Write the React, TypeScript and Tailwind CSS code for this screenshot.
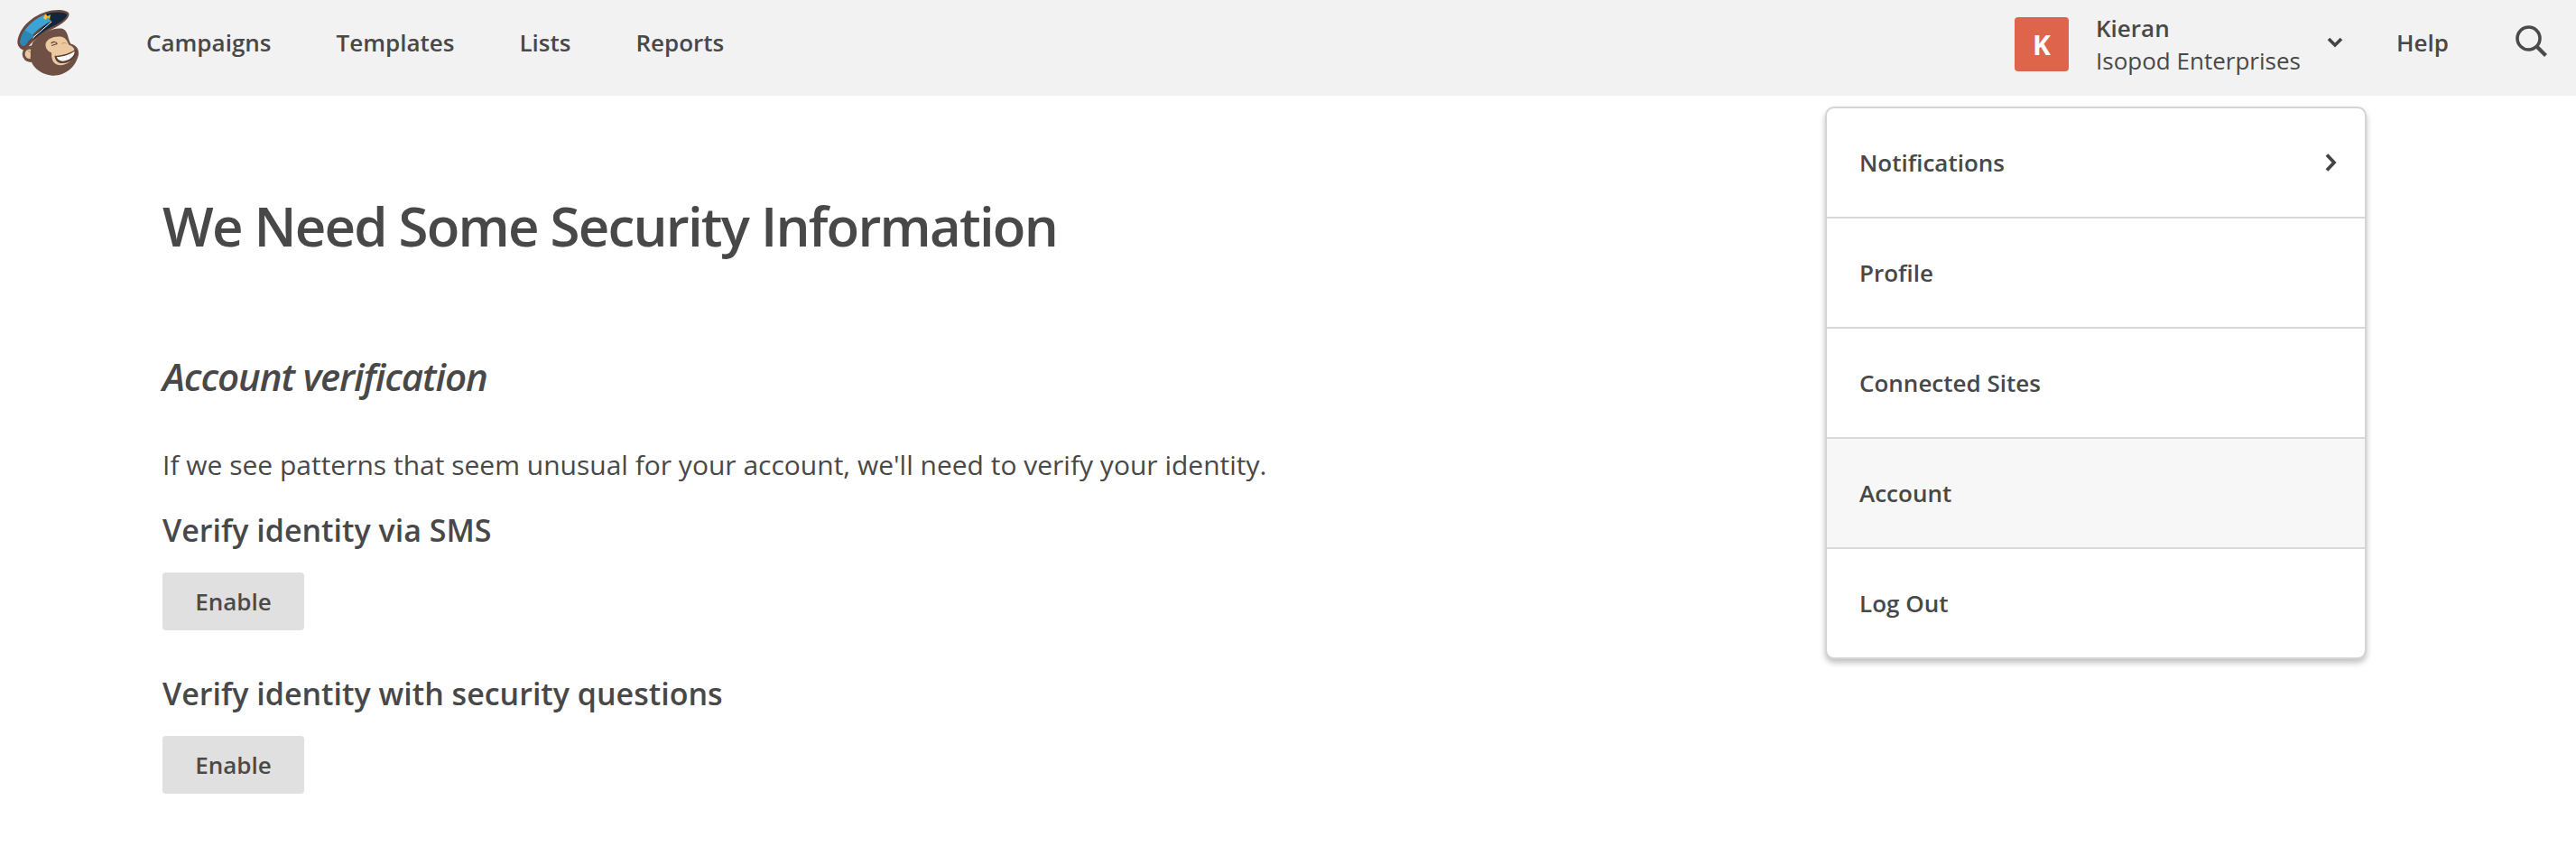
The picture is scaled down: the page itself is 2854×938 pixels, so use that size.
function Logo({ className }: { className: string }) {
  return (
    <svg viewBox="50 30 230 235" className={className}>
      <path d="M56 140C60 100 95 58 150 40C180 30 218 30 228 44C232 60 205 80 172 97C130 117 100 142 82 168C70 168 56 156 56 140Z" fill="#6a4a40" />
      <path d="M65 140C69 105 100 68 148 48L170 72C130 88 105 112 88 142C80 157 67 155 65 140Z" fill="#3ba3d6" />
      <path d="M65 140C67 125 73 112 81 100L112 120C102 128 94 135 88 142C80 157 67 155 65 140Z" fill="#2b86b8" />
      <path d="M148 47C175 38 210 38 221 47C224 58 197 77 167 91C147 101 127 116 110 132C125 102 145 82 170 70Z" fill="#13263c" />
      <path d="M108 126L170 72" stroke="#ffffff" strokeWidth="3" fill="none" />
      <path d="M142 60L150 46L157 54L166 48L164 64L157 58L150 66Z" fill="#f5c12e" />
      <circle cx="100" cy="180" r="28" fill="#6f5045" />
      <circle cx="97" cy="180" r="16" fill="#e9c8a2" />
      <path d="M92 170C104 172 108 186 98 192" stroke="#a87e5f" strokeWidth="3" fill="none" />
      <path d="M108 140C135 108 180 90 208 96C226 104 224 130 234 146C255 150 266 170 258 190C248 225 215 254 172 252C130 248 100 220 100 190C100 170 100 155 108 140Z" fill="#6f5045" />
      <path d="M150 146C154 130 176 120 200 122C218 124 222 138 228 150C244 154 250 168 246 180C240 206 212 222 190 216C176 212 168 196 170 176C158 172 148 160 150 146Z" fill="#ecc9a0" />
      <path d="M168 145C175 137 185 139 189 146M170 152L189 146" stroke="#5b3f35" strokeWidth="3.5" fill="none" />
      <path d="M203 146C208 142 216 142 220 146" stroke="#c09a78" strokeWidth="3" fill="none" />
      <path d="M180 186C205 186 236 176 252 163C258 184 238 210 205 211C190 211 181 200 180 186Z" fill="#5b3f35" />
      <path d="M187 190C208 190 232 182 247 171C247 187 230 203 207 204C196 204 189 198 187 190Z" fill="#ffffff" />
      <path d="M208 190V203M220 187V201M232 181V194" stroke="#d9d0c8" strokeWidth="1.5" fill="none" />
    </svg>
  )
}

function SearchIcon() {
  return (
    <svg viewBox="0 0 35 35" className="w-[35px] h-[35px] ml-[74px] -mt-[8px]" fill="none" stroke="#4a4a4a" strokeWidth="3.6">
      <circle cx="14.5" cy="14.5" r="12.5" />
      <path d="M23.5 23.5L33.5 33.5" strokeWidth="4.2" />
    </svg>
  )
}

const menuItems = ["Notifications", "Profile", "Connected Sites", "Account", "Log Out"]

function EnableButton() {
  return (
    <button className="block w-[157px] h-[64px] bg-[#e0e0e0] rounded-[4px] text-[26px] font-semibold text-[#4a4a4a]">
      Enable
    </button>
  )
}

export default function App() {
  return (
    <div className="relative h-[938px] bg-white overflow-hidden font-['Open_Sans',sans-serif] text-[#484848]">
      <header className="h-[106px] bg-[#f2f2f2] flex items-center pl-[17px] pr-[32px] pb-[8px]">
        <Logo className="w-[77px] h-[78px] shrink-0" />
        <nav className="flex items-center gap-[72px] ml-[68px] -mt-[4px] text-[26px] font-semibold">
          <span>Campaigns</span>
          <span>Templates</span>
          <span>Lists</span>
          <span>Reports</span>
        </nav>
        <div className="ml-auto flex items-center">
          <div className="w-[60px] h-[60px] rounded-[4px] bg-[#de654b] text-white flex items-center justify-center text-[30px] font-bold">
            K
          </div>
          <div className="ml-[30px] text-[26px] leading-[36px] w-[226px] whitespace-nowrap">
            <div className="font-semibold">Kieran</div>
            <div>Isopod Enterprises</div>
          </div>
          <svg viewBox="0 0 18 12" className="w-[18px] h-[12px] ml-[30px] -mt-[4px]" fill="none" stroke="#444444" strokeWidth="3.6">
            <path d="M2 2L9 9L16 2" />
          </svg>
          <span className="ml-[59px] -mt-[4px] text-[26px] font-semibold">Help</span>
          <SearchIcon />
        </div>
      </header>

      <main className="pl-[180px] pt-[108px]">
        <h1 className="text-[60px] leading-[72px] font-semibold tracking-[-1.8px]">We Need Some Security Information</h1>
        <h2 className="mt-[105px] text-[42px] leading-[52px] font-semibold italic tracking-[-1.1px]">Account verification</h2>
        <p className="mt-[50px] text-[30px] leading-[44px]">
          If we see patterns that seem unusual for your account, we'll need to verify your identity.
        </p>
        <h3 className="mt-[27px] text-[34px] leading-[46px] font-semibold">Verify identity via SMS</h3>
        <div className="mt-[24px]">
          <EnableButton />
        </div>
        <h3 className="mt-[47px] text-[34px] leading-[46px] font-semibold">Verify identity with security questions</h3>
        <div className="mt-[24px]">
          <EnableButton />
        </div>
      </main>

      <div className="absolute top-[118px] left-[2022px] w-[600px] bg-white border-2 border-[#d4d4d4] rounded-[10px] shadow-[0_4px_6px_rgba(0,0,0,0.25)] overflow-hidden">
        {menuItems.map((item, i) => (
          <div
            key={item}
            className={
              i === 3
                ? "h-[122px] flex items-center justify-between px-[36px] text-[26px] font-semibold border-t-2 border-[#d9d9d9] bg-[#f7f7f7]"
                : i === 0
                  ? "h-[120px] flex items-center justify-between px-[36px] text-[26px] font-semibold"
                  : "h-[122px] flex items-center justify-between px-[36px] text-[26px] font-semibold border-t-2 border-[#d9d9d9]"
            }
          >
            <span>{item}</span>
            {i === 0 && (
              <svg viewBox="0 0 13 20" className="w-[13px] h-[20px] mr-[-5px]" fill="none" stroke="#444444" strokeWidth="3.8">
                <path d="M2 1.5L10 10L2 18.5" />
              </svg>
            )}
          </div>
        ))}
      </div>
    </div>
  )
}
